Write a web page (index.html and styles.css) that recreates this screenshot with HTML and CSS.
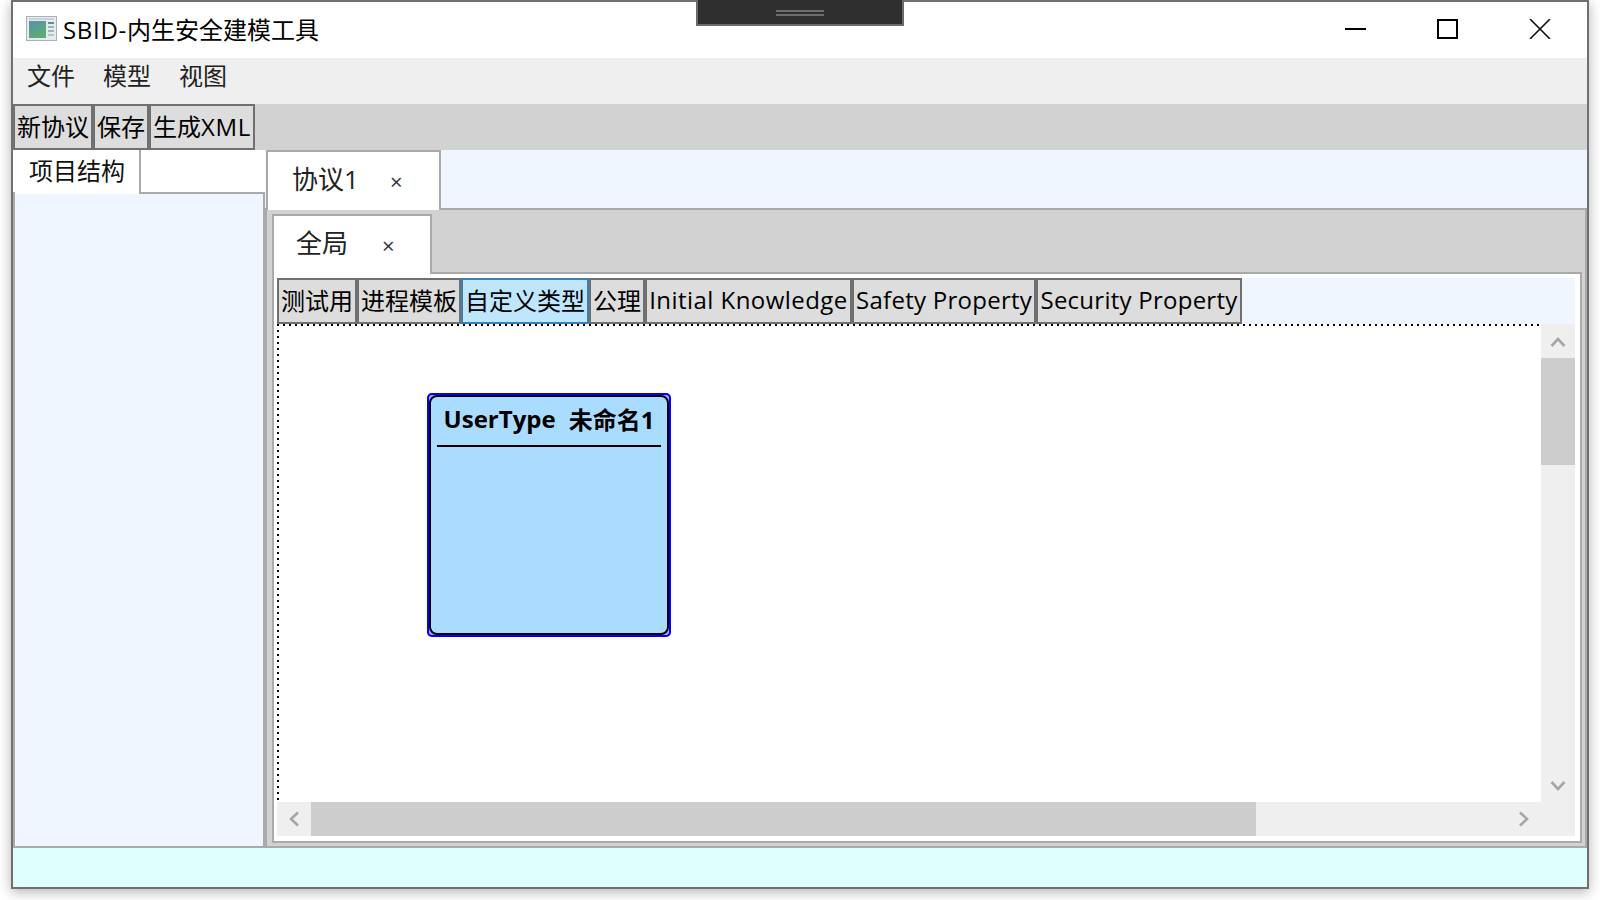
FILE: index.html
```html
<!DOCTYPE html>
<html lang="zh-CN">
<head>
    <meta charset="UTF-8">
    <meta name="viewport" content="width=device-width, initial-scale=1.0">
    <title>SBID-内生安全建模工具</title>
    <link rel="stylesheet" href="styles.css">
</head>
<body>
    <div class="window">
        <div class="titlebar">
            <svg class="app-icon" width="31" height="25" viewBox="0 0 31 25">
                <defs>
                    <linearGradient id="icon-fill" x1="0" y1="0" x2="0.6" y2="1">
                        <stop offset="0" stop-color="#5a8fb0"/>
                        <stop offset="1" stop-color="#5cae70"/>
                    </linearGradient>
                </defs>
                <rect x="0.5" y="0.5" width="30" height="24" fill="#e6ebee" stroke="#a9b2b6"/>
                <rect x="3" y="5" width="17" height="17" fill="url(#icon-fill)"/>
                <rect x="3" y="2" width="25" height="2" fill="#c9d3d8"/>
                <rect x="22" y="6" width="6" height="2" fill="#4f9a8a"/>
                <rect x="22" y="10" width="6" height="2" fill="#9fb4bc"/>
                <rect x="22" y="14" width="6" height="2" fill="#9fb4bc"/>
                <rect x="22" y="18" width="6" height="2" fill="#b5c2c8"/>
            </svg>
            <span class="app-title"><span class="wide-latin">SBID-</span>内生安全建模工具</span>
            <div class="window-controls">
                <svg width="22" height="20" viewBox="0 0 22 20"><path d="M0 10h21" stroke="#000" stroke-width="2"/></svg>
                <svg width="22" height="20" viewBox="0 0 22 20"><rect x="1" y="1" width="19" height="18" fill="none" stroke="#000" stroke-width="2"/></svg>
                <svg width="22" height="20" viewBox="0 0 22 20"><path d="M1 0l20 20M21 0L1 20" stroke="#111" stroke-width="1.6" fill="none"/></svg>
            </div>
        </div>

        <div class="menubar">
            <span class="menu-item">文件</span>
            <span class="menu-item">模型</span>
            <span class="menu-item">视图</span>
        </div>

        <div class="toolbar">
            <button class="tool-btn">新协议</button>
            <button class="tool-btn">保存</button>
            <button class="tool-btn">生成<span class="wide-latin">XML</span></button>
        </div>

        <div class="workspace">
            <div class="side-pane">
                <div class="side-header">
                    <div class="side-tab">项目结构</div>
                </div>
                <div class="side-body"></div>
            </div>

            <div class="main-pane">
                <div class="doc-header">
                    <div class="doc-tab">
                        <span>协议1</span>
                        <span class="tab-close">×</span>
                    </div>
                </div>
                <div class="doc-body">
                    <div class="scope-header">
                        <div class="scope-tab">
                            <span>全局</span>
                            <span class="tab-close">×</span>
                        </div>
                    </div>
                    <div class="scope-body">
                        <div class="sheet-tabs">
                            <button class="tool-btn">测试用</button>
                            <button class="tool-btn">进程模板</button>
                            <button class="tool-btn active">自定义类型</button>
                            <button class="tool-btn">公理</button>
                            <button class="tool-btn sheet-initial">Initial Knowledge</button>
                            <button class="tool-btn sheet-safety">Safety Property</button>
                            <button class="tool-btn sheet-security">Security Property</button>
                        </div>
                        <div class="canvas-row">
                            <div class="canvas">
                                <div class="node">
                                    <div class="node-inner">
                                        <div class="node-title">
                                            <span>UserType</span>
                                            <span>未命名1</span>
                                        </div>
                                    </div>
                                </div>
                            </div>
                            <div class="vscroll">
                                <div class="scroll-btn">
                                    <svg width="16" height="14" viewBox="0 0 16 14"><path d="M1.500 12L8 5l6.500 7" class="chevron"/></svg>
                                </div>
                                <div class="vthumb"></div>
                                <div class="scroll-space"></div>
                                <div class="scroll-btn">
                                    <svg width="16" height="14" viewBox="0 0 16 14"><path d="M1.500 4L8 11l6.500-7" class="chevron"/></svg>
                                </div>
                            </div>
                        </div>
                        <div class="hscroll">
                            <div class="scroll-btn">
                                <svg width="12" height="16" viewBox="0 0 12 16"><path d="M10 1.500L3 8l7 6.500" class="chevron"/></svg>
                            </div>
                            <div class="hthumb"></div>
                            <div class="scroll-space"></div>
                            <div class="scroll-btn">
                                <svg width="12" height="16" viewBox="0 0 12 16"><path d="M2 1.500L9 8l-7 6.500" class="chevron"/></svg>
                            </div>
                            <div class="scroll-btn"></div>
                        </div>
                    </div>
                </div>
            </div>
        </div>

        <div class="statusbar"></div>

        <div class="grip">
            <span class="grip-line"></span>
            <span class="grip-line"></span>
        </div>
    </div>
</body>
</html>
```

FILE: styles.css
```css
* {
    box-sizing: border-box;
}

body {
    margin: 0;
    height: 900px;
    overflow: hidden;
    background-color: #fff;
    color: #000;
    font-family: "Open Sans", "Noto Sans CJK SC", sans-serif;
    font-size: 24px;
}

.window {
    position: relative;
    width: 1578px;
    height: 889px;
    margin-left: 11px;
    display: flex;
    flex-direction: column;
    border: 2px solid #707070;
    background-color: #fff;
    box-shadow: 0 3px 12px rgba(0, 0, 0, 0.3);
}

.titlebar {
    height: 56px;
    display: flex;
    align-items: center;
    padding-left: 13px;
    padding-bottom: 3px;
    background-color: #fff;
}

.app-icon {
    margin-right: 6px;
}

.app-title {
    white-space: nowrap;
}

.wide-latin {
    letter-spacing: 0.7px;
}

.window-controls {
    margin-left: auto;
    margin-right: 36px;
    display: flex;
    gap: 70px;
}

.grip {
    position: absolute;
    top: -2px;
    left: 683px;
    width: 208px;
    height: 26px;
    display: flex;
    flex-direction: column;
    align-items: center;
    justify-content: center;
    gap: 2px;
    padding-top: 1px;
    background-color: #2f2f2f;
    border: 2px solid #6a6a6a;
    border-top: none;
}

.grip-line {
    width: 48px;
    height: 2px;
    background-color: #6d6d6d;
}

.menubar {
    height: 46px;
    display: flex;
    align-items: center;
    gap: 28px;
    padding-left: 14px;
    padding-bottom: 13px;
    background-color: #efefef;
    color: #222;
}

.toolbar {
    height: 46px;
    display: flex;
    background-color: #d2d2d2;
}

.tool-btn {
    height: 46px;
    padding: 0 2px 3px;
    border: 2px solid #707070;
    background-color: #ddd;
    color: #000;
    font-family: inherit;
    font-size: 24px;
    white-space: nowrap;
}

.tool-btn.active {
    border-color: #3c7fb1;
    background-color: #bee6fd;
}

.sheet-initial {
    width: 207px;
    letter-spacing: 0.45px;
}

.sheet-safety {
    width: 184px;
    letter-spacing: 0.27px;
}

.sheet-security {
    width: 206px;
    letter-spacing: 0.25px;
}

.workspace {
    flex: 1;
    display: flex;
    min-height: 0;
}

.side-pane {
    width: 252px;
    display: flex;
    flex-direction: column;
}

.side-header {
    height: 44px;
    flex-shrink: 0;
    display: flex;
    padding-left: 2px;
    border-bottom: 2px solid #aaa;
    background-color: #fff;
}

.side-tab {
    width: 126px;
    height: 44px;
    padding: 2px 0 0 14px;
    background-color: #fff;
    border-right: 2px solid #aaa;
    color: #111;
}

.side-body {
    flex: 1;
    background-color: #eff6ff;
    border: 2px solid #aaa;
    border-top: none;
}

.main-pane {
    width: 1322px;
    display: flex;
    flex-direction: column;
}

.doc-header {
    height: 60px;
    flex-shrink: 0;
    display: flex;
    padding-left: 1px;
    background-color: #eff6ff;
    border-bottom: 2px solid #aaa;
}

.doc-tab,
.scope-tab {
    height: 60px;
    display: flex;
    align-items: center;
    padding-bottom: 6px;
    background-color: #fff;
    border: 2px solid #aaa;
    border-bottom: none;
    color: #222;
    font-size: 26px;
}

.doc-tab {
    width: 175px;
    padding-left: 24px;
}

.scope-tab {
    width: 160px;
    padding-left: 22px;
}

.tab-close {
    margin-top: 6px;
    font-size: 22px;
    color: #334;
}

.doc-tab .tab-close {
    margin-left: 31px;
}

.scope-tab .tab-close {
    margin-left: 34px;
}

.doc-body {
    flex: 1;
    display: flex;
    flex-direction: column;
    padding: 4px 3px 3px 5px;
    background-color: #d2d2d2;
    border: 2px solid #aaa;
    border-top: none;
    min-height: 0;
}

.scope-header {
    height: 60px;
    flex-shrink: 0;
    display: flex;
    border-bottom: 2px solid #aaa;
}

.scope-body {
    flex: 1;
    display: flex;
    flex-direction: column;
    padding: 4px 5px 5px 3px;
    background-color: #fff;
    border: 2px solid #aaa;
    border-top: none;
    min-height: 0;
}

.sheet-tabs {
    height: 46px;
    flex-shrink: 0;
    display: flex;
    background-color: #eff6ff;
}

.canvas-row {
    flex: 1;
    display: flex;
    min-height: 0;
}

.canvas {
    flex: 1;
    position: relative;
    background-color: #fff;
    background-image:
        repeating-linear-gradient(90deg, #000 0 2px, transparent 2px 6px),
        repeating-linear-gradient(180deg, #000 0 2px, transparent 2px 6px);
    background-size: 100% 2px, 2px 100%;
    background-repeat: no-repeat;
}

.node {
    position: absolute;
    left: 150px;
    top: 69px;
    width: 244px;
    height: 244px;
    padding: 2px;
    border-radius: 5px;
    background-color: #a9a9ff;
    box-shadow: inset 0 0 0 2px #0000ff;
}

.node-inner {
    height: 100%;
    padding: 0 6px;
    border: 2px solid #000;
    border-radius: 8px;
    background-color: #aadcff;
}

.node-title {
    height: 50px;
    display: flex;
    align-items: center;
    justify-content: center;
    gap: 13px;
    padding-bottom: 5px;
    border-bottom: 2px solid #000;
    font-weight: bold;
    white-space: nowrap;
}

.vscroll {
    width: 34px;
    display: flex;
    flex-direction: column;
    background-color: #efefef;
}

.hscroll {
    height: 34px;
    flex-shrink: 0;
    display: flex;
    background-color: #efefef;
}

.scroll-btn {
    width: 34px;
    height: 34px;
    flex-shrink: 0;
    display: flex;
    align-items: center;
    justify-content: center;
}

.scroll-space {
    flex: 1;
}

.vthumb {
    height: 107px;
    background-color: #cdcdcd;
}

.hthumb {
    width: 945px;
    background-color: #cdcdcd;
}

.chevron {
    fill: none;
    stroke: #a6a6a6;
    stroke-width: 2.6;
}

.statusbar {
    height: 39px;
    flex-shrink: 0;
    background-color: #dfffff;
}
```
